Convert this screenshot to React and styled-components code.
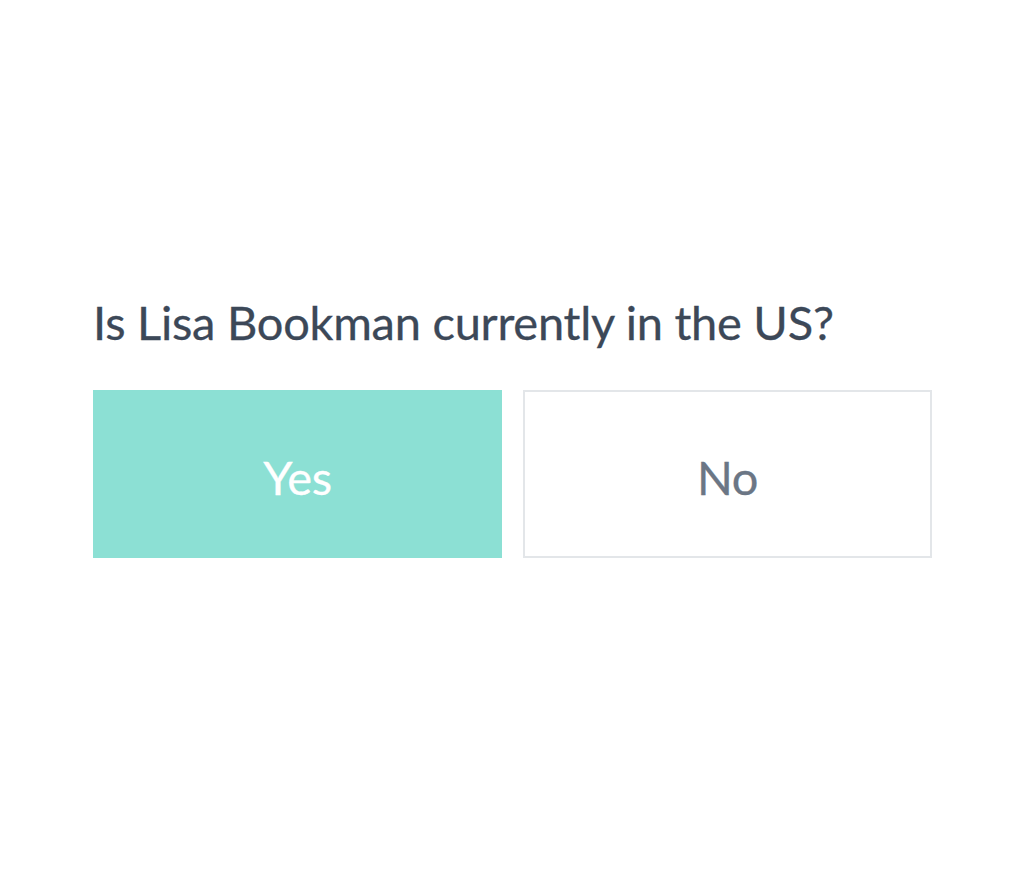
import React from "react";
import styled, { createGlobalStyle } from "styled-components";

const Global = createGlobalStyle`
  html, body { margin: 0; padding: 0; background: #ffffff; }
  body { font-family: Lato, "Noto Sans", sans-serif; }
`;

const Page = styled.main`
  width: 1026px;
  height: 873px;
  box-sizing: border-box;
  padding: 290px 94px 0 93px;
  display: flex;
  flex-direction: column;
`;

const Question = styled.h1`
  margin: 0;
  font-family: Lato, "Noto Sans", sans-serif;
  font-weight: 400;
  font-size: 47px;
  line-height: 64px;
  color: #3c4858;
  letter-spacing: -0.25px;
  -webkit-text-stroke: 0.3px #3c4858;
`;

const Choices = styled.div`
  margin-top: 36px;
  display: grid;
  grid-template-columns: 409px 409px;
  column-gap: 21px;
`;

const Choice = styled.button`
  height: 168px;
  box-sizing: border-box;
  margin: 0;
  padding: 5px 0 0;
  font-family: Lato, "Noto Sans", sans-serif;
  font-size: 47px;
  font-weight: 400;
  letter-spacing: -0.3px;
  cursor: pointer;
  background: ${(p) => (p.$selected ? "#8ce0d4" : "#ffffff")};
  color: ${(p) => (p.$selected ? "#ffffff" : "#6b7685")};
  -webkit-text-stroke: 0.3px ${(p) => (p.$selected ? "#ffffff" : "#6b7685")};
  border: ${(p) => (p.$selected ? "none" : "2px solid #e3e6e9")};
`;

export default function App() {
  return (
    <>
      <Global />
      <Page>
        <Question>Is Lisa Bookman currently in the US?</Question>
        <Choices>
          <Choice $selected>Yes</Choice>
          <Choice>No</Choice>
        </Choices>
      </Page>
    </>
  );
}
